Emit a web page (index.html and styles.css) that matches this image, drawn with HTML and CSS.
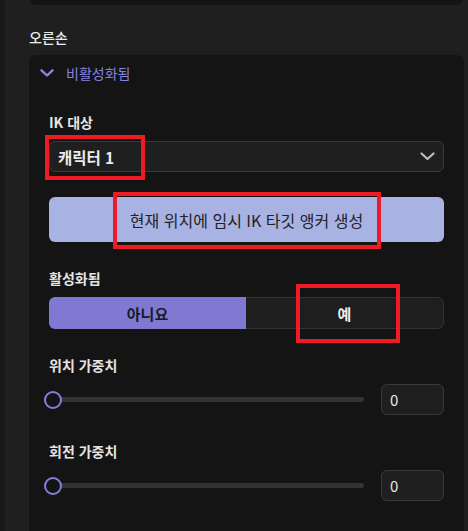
FILE: index.html
```html
<!DOCTYPE html>
<html lang="ko">
<head>
<meta charset="utf-8">
<link rel="stylesheet" href="styles.css">
</head>
<body>
<div class="edge"></div>
<div class="main">
  <div class="top-card"></div>
  <div class="section-title">오른손</div>
  <div class="card">
    <div class="card-header">
      <svg class="chev" width="14" height="8" viewBox="0 0 14 8"><path d="M1.5 1.3 L7 6.5 L12.5 1.3" fill="none" stroke="#8a84e2" stroke-width="2.4" stroke-linecap="round" stroke-linejoin="round"/></svg>
      <span class="header-text">비활성화됨</span>
    </div>

    <div class="label first">IK 대상</div>
    <div class="select">
      <span class="select-text">캐릭터 1</span>
      <svg width="15" height="9" viewBox="0 0 15 9"><path d="M1.5 1.5 L7.5 7 L13.5 1.5" fill="none" stroke="#bdbdbd" stroke-width="2.2" stroke-linecap="round" stroke-linejoin="round"/></svg>
    </div>
    <div class="action-btn">현재 위치에 임시 IK 타깃 앵커 생성</div>

    <div class="label spaced">활성화됨</div>
    <div class="toggle">
      <div class="opt on">아니요</div>
      <div class="opt off">예</div>
    </div>

    <div class="label spaced">위치 가중치</div>
    <div class="slider-row">
      <div class="slider"><div class="track"></div><div class="thumb"></div></div>
      <div class="num">0</div>
    </div>

    <div class="label spaced">회전 가중치</div>
    <div class="slider-row">
      <div class="slider"><div class="track"></div><div class="thumb"></div></div>
      <div class="num">0</div>
    </div>

    <div class="label spaced">힌트 위치 가중치</div>
  </div>
</div>

<div class="mark mark-1"></div>
<div class="mark mark-2"></div>
<div class="mark mark-3"></div>
</body>
</html>
```

FILE: styles.css
```css
html, body {
  margin: 0;
  padding: 0;
}
body {
  width: 468px;
  height: 531px;
  overflow: hidden;
  background: #1f1f1f;
  display: flex;
  font-family: "Noto Sans CJK KR", "Noto Sans", sans-serif;
  color: #e6e6e6;
  position: relative;
}
.edge {
  width: 5px;
  flex: none;
  background: #181818;
}
.main {
  flex: 1;
  padding-left: 24px;
  padding-right: 4px;
}
.top-card {
  height: 5px;
  margin-left: 1px;
  margin-right: 2px;
  background: #141414;
  border-radius: 0 0 8px 8px;
}
.section-title {
  margin-top: 22px;
  height: 20px;
  line-height: 20px;
  font-size: 14px;
  font-weight: 500;
  color: #ececec;
}
.card {
  margin-top: 8px;
  background: #141414;
  border-radius: 8px;
  padding: 0 20px 40px 20px;
}
.card-header {
  height: 36px;
  display: flex;
  align-items: center;
  margin-left: -9px;
  gap: 12px;
}
.chev {
  flex: none;
}
.header-text {
  font-size: 14px;
  color: #8782e0;
  line-height: 18px;
}
.label {
  font-size: 14px;
  font-weight: 700;
  line-height: 18px;
  color: #e4e4e4;
  margin-bottom: 10px;
}
.label.first {
  margin-top: 22px;
}
.label.spaced {
  margin-top: 27px;
}
.select {
  height: 31px;
  box-sizing: border-box;
  border: 1px solid #393939;
  border-radius: 6px;
  background: #1f1f1f;
  display: flex;
  align-items: center;
  justify-content: space-between;
  padding: 0 8px 0 8px;
}
.select-text {
  font-size: 15.5px;
  font-weight: 700;
  color: #ececec;
}
.action-btn {
  margin-top: 25px;
  height: 45px;
  border-radius: 6px;
  background: #a9b3e3;
  color: #222226;
  font-size: 16px;
  display: flex;
  align-items: center;
  justify-content: center;
}
.toggle {
  height: 32px;
  display: flex;
  border-radius: 6px;
  overflow: hidden;
}
.opt {
  flex: 1;
  display: flex;
  align-items: center;
  justify-content: center;
  font-size: 15px;
  font-weight: 700;
}
.opt.on {
  background: #7f79d1;
  color: #1b1b1f;
}
.opt.off {
  background: #1e1e1e;
  color: #eeeeee;
  border: 1px solid #333333;
  border-left: none;
  border-radius: 0 6px 6px 0;
}
.slider-row {
  height: 31px;
  display: flex;
  align-items: center;
  gap: 17px;
}
.slider {
  flex: 1;
  position: relative;
  height: 20px;
  display: flex;
  align-items: center;
}
.track {
  flex: 1;
  height: 5px;
  border-radius: 3px;
  background: #333333;
}
.thumb {
  position: absolute;
  left: -5px;
  top: 1px;
  width: 14px;
  height: 14px;
  border: 2px solid #8580e0;
  border-radius: 50%;
  background: #141414;
}
.num {
  width: 63px;
  height: 31px;
  box-sizing: border-box;
  border: 1px solid #393939;
  border-radius: 6px;
  background: #1f1f1f;
  font-size: 15px;
  color: #e6e6e6;
  display: flex;
  align-items: center;
  padding-left: 8px;
}
.mark {
  position: absolute;
  border: 4px solid #ed1c24;
  box-sizing: border-box;
}
.mark-1 {
  left: 45px;
  top: 135px;
  width: 100px;
  height: 45px;
}
.mark-2 {
  left: 113px;
  top: 192px;
  width: 268px;
  height: 57px;
}
.mark-3 {
  left: 296px;
  top: 284px;
  width: 104px;
  height: 59px;
}
```
